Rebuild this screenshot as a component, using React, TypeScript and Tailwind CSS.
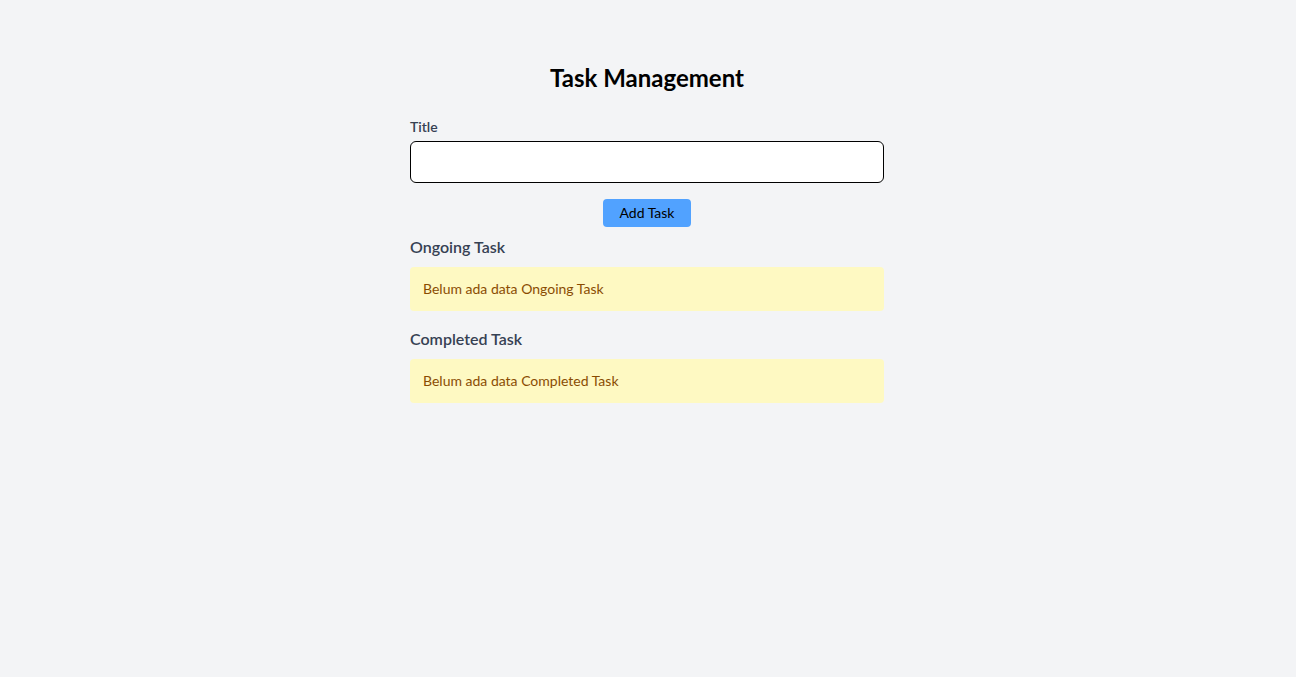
function TaskSection({ title }: { title: string }) {
  return (
    <section className="mb-4">
      <h2 className="mb-2 text-base leading-6 font-semibold text-gray-700">
        {title}
      </h2>
      <div className="h-[44px] flex items-center rounded bg-yellow-100 px-[13px] text-sm text-yellow-800">
        Belum ada data {title}
      </div>
    </section>
  );
}

function App() {
  return (
    <div
      className="min-h-[677px] bg-gray-100 pt-[62px] pr-0.5"
      style={{ fontFamily: 'Lato, "Noto Sans", sans-serif' }}
    >
      <div className="mx-auto w-[474px]">
        <h1 className="mb-[23px] text-center text-2xl leading-8 font-bold text-black">
          Task Management
        </h1>
        <label className="mb-1 block text-sm leading-5 font-semibold text-gray-700">
          Title
        </label>
        <input
          type="text"
          className="block h-[42px] w-full rounded-md border border-black bg-white px-3"
        />
        <div className="mt-4 mb-2 flex justify-center">
          <button className="h-7 w-[88px] rounded bg-blue-400 text-sm text-black">
            Add Task
          </button>
        </div>
        <TaskSection title="Ongoing Task" />
        <TaskSection title="Completed Task" />
      </div>
    </div>
  );
}

export default App;
